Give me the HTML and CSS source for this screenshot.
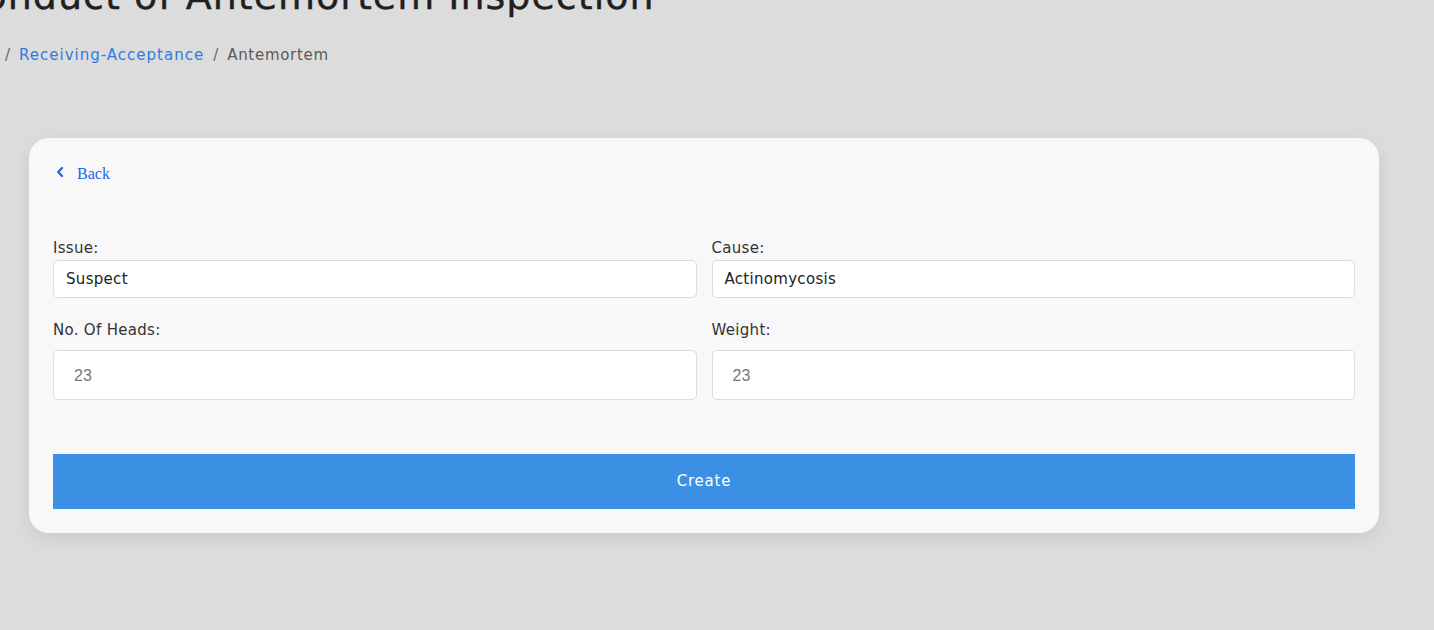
FILE: index.html
```html
<!DOCTYPE html>
<html>
<head>
<meta charset="utf-8">
<link rel="stylesheet" href="styles.css">
</head>
<body>
<div class="page">
  <header class="page-head">
    <h1 class="title">Conduct of Antemortem Inspection</h1>
    <nav class="crumbs">
      <span class="sep">/</span>
      <a class="crumb-link" href="#">Receiving-Acceptance</a>
      <span class="sep">/</span>
      <span class="crumb-current">Antemortem</span>
    </nav>
  </header>
  <main class="card">
    <a class="back" href="#">
      <svg class="back-icon" width="8" height="10" viewBox="0 0 8 10"><path d="M6 1 L2.2 5 L6 9" fill="none" stroke="currentColor" stroke-width="2.2" stroke-linecap="round" stroke-linejoin="round"/></svg>
      <span>Back</span>
    </a>
    <form class="form">
      <div class="grid">
        <div class="field">
          <label class="label">Issue:</label>
          <div class="input sm">Suspect</div>
        </div>
        <div class="field">
          <label class="label">Cause:</label>
          <div class="input sm">Actinomycosis</div>
        </div>
        <div class="field">
          <label class="label lg-label">No. Of Heads:</label>
          <div class="input lg placeholder">23</div>
        </div>
        <div class="field">
          <label class="label lg-label">Weight:</label>
          <div class="input lg placeholder">23</div>
        </div>
      </div>
      <button type="button" class="btn">Create</button>
    </form>
  </main>
</div>
</body>
</html>
```
FILE: styles.css
```css
html, body {
  margin: 0;
  padding: 0;
  background: #dcdcdc;
  overflow: hidden;
}
body {
  font-family: "DejaVu Sans", Inter, sans-serif;
  color: #2b2b2b;
  width: 1434px;
  height: 630px;
}
.page {
  display: flex;
  flex-direction: column;
}
.page-head {
  display: flex;
  flex-direction: column;
}
.title {
  margin: -26px 0 0 -44px;
  font-size: 38px;
  font-weight: normal;
  line-height: 44px;
  letter-spacing: 1px;
  color: #1f1f1f;
  -webkit-text-stroke: 0.4px #1f1f1f;
  white-space: nowrap;
}
.crumbs {
  margin: 26px 0 0 5px;
  display: flex;
  gap: 9px;
  font-size: 15px;
  line-height: 22px;
  color: #555;
}
.sep { color: #666; }
.crumb-link { color: #2f7ae5; text-decoration: none; letter-spacing: 1px; }
.crumb-current { color: #5a5a5a; letter-spacing: 0.7px; }
.card {
  margin: 72px 0 0 29px;
  width: 1350px;
  box-sizing: border-box;
  background: #f8f8f8;
  border-radius: 20px;
  box-shadow: 0 6px 18px rgba(0,0,0,0.08);
  padding: 24px 24px 24px 24px;
}
.back {
  display: inline-flex;
  align-items: center;
  gap: 13px;
  margin-left: 3px;
  color: #1a63f0;
  text-decoration: none;
  font-family: "Liberation Serif", serif;
  font-size: 16px;
  line-height: 22px;
}
.back-icon { margin-top: -3px; }
.form {
  margin-top: 52px;
}
.grid {
  display: grid;
  grid-template-columns: 1fr 1fr;
  column-gap: 15px;
  row-gap: 21px;
}
.field {
  display: flex;
  flex-direction: column;
}
.label {
  font-size: 15px;
  line-height: 22px;
  letter-spacing: 0.3px;
  color: #333;
  margin-bottom: 1px;
}
.label.lg-label { margin-bottom: 9px; }
.input {
  box-sizing: border-box;
  background: #fff;
  border: 1px solid #dcdcdc;
  border-radius: 5px;
  display: flex;
  align-items: center;
  font-size: 15px;
  letter-spacing: 0.3px;
  color: #222;
}
.input.sm { height: 38px; padding-left: 12px; }
.input.lg { height: 50px; padding-left: 20px; padding-top: 2px; }
.placeholder {
  font-family: "Liberation Sans", Arial, sans-serif;
  color: #777;
  font-size: 16px;
  letter-spacing: 0;
}
.btn {
  margin-top: 54px;
  width: 100%;
  height: 55px;
  border: none;
  background: #3c90e4;
  color: #fff;
  font-family: "DejaVu Sans", Inter, sans-serif;
  font-size: 15px;
  letter-spacing: 0.8px;
  display: block;
}
```
